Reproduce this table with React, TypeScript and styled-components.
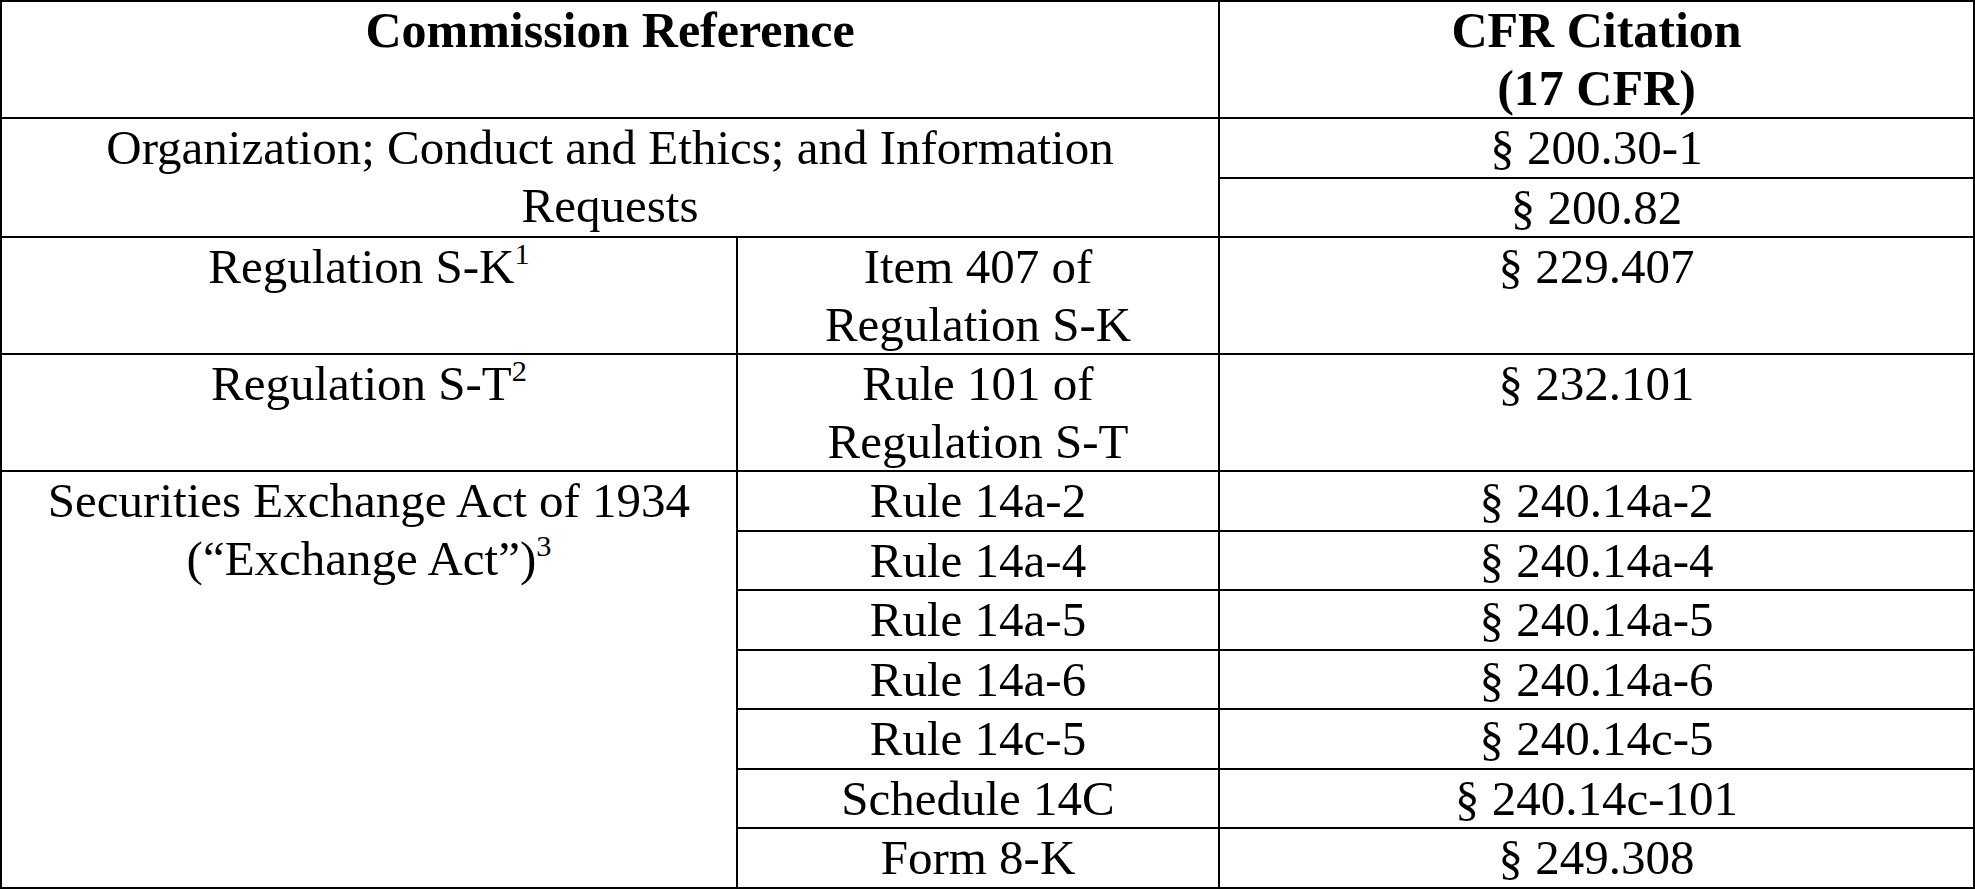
import styled, { createGlobalStyle } from "styled-components";

const GlobalStyle = createGlobalStyle`
  html, body {
    margin: 0;
    padding: 0;
    background: #ffffff;
  }
  body {
    font-family: "Liberation Serif", "Times New Roman", serif;
    color: #000000;
  }
`;

const Table = styled.table`
  width: 1975px;
  table-layout: fixed;
  border-collapse: collapse;
  border: 2px solid #000;
  font-family: "Liberation Serif", "Times New Roman", serif;
  font-size: 49px;
  line-height: 57.5px;
  color: #000;
`;

const HeadCell = styled.th`
  border: 2px solid #000;
  padding: 0 8px;
  font-size: 50px;
  font-weight: 700;
  text-align: center;
  vertical-align: top;
`;

const Cell = styled.td`
  border: 2px solid #000;
  padding: 0 8px;
  font-weight: 400;
  text-align: center;
  vertical-align: top;
`;

const Sup = styled.sup`
  font-size: 0.62em;
  line-height: 0;
  vertical-align: 0.62em;
  color: #000;
`;

type RuleRow = { rule: string; cite: string };

const exchangeRules: RuleRow[] = [
  { rule: "Rule 14a-2", cite: "§ 240.14a-2" },
  { rule: "Rule 14a-4", cite: "§ 240.14a-4" },
  { rule: "Rule 14a-5", cite: "§ 240.14a-5" },
  { rule: "Rule 14a-6", cite: "§ 240.14a-6" },
  { rule: "Rule 14c-5", cite: "§ 240.14c-5" },
  { rule: "Schedule 14C", cite: "§ 240.14c-101" },
  { rule: "Form 8-K", cite: "§ 249.308" },
];

export default function App() {
  const [first, ...rest] = exchangeRules;
  return (
    <>
      <GlobalStyle />
      <Table>
        <colgroup>
          <col style={{ width: 736 }} />
          <col style={{ width: 482 }} />
          <col />
        </colgroup>
        <thead>
          <tr>
            <HeadCell colSpan={2}>Commission Reference</HeadCell>
            <HeadCell>
              CFR Citation
              <br />
              (17 CFR)
            </HeadCell>
          </tr>
        </thead>
        <tbody>
          <tr>
            <Cell colSpan={2} rowSpan={2}>
              Organization; Conduct and Ethics; and Information
              <br />
              Requests
            </Cell>
            <Cell>§ 200.30-1</Cell>
          </tr>
          <tr>
            <Cell>§ 200.82</Cell>
          </tr>
          <tr>
            <Cell>
              Regulation S-K<Sup>1</Sup>
            </Cell>
            <Cell>
              Item 407 of
              <br />
              Regulation S-K
            </Cell>
            <Cell>§ 229.407</Cell>
          </tr>
          <tr>
            <Cell>
              Regulation S-T<Sup>2</Sup>
            </Cell>
            <Cell>
              Rule 101 of
              <br />
              Regulation S-T
            </Cell>
            <Cell>§ 232.101</Cell>
          </tr>
          <tr>
            <Cell rowSpan={exchangeRules.length}>
              Securities Exchange Act of 1934
              <br />
              (“Exchange Act”)<Sup>3</Sup>
            </Cell>
            <Cell>{first.rule}</Cell>
            <Cell>{first.cite}</Cell>
          </tr>
          {rest.map((r) => (
            <tr key={r.rule}>
              <Cell>{r.rule}</Cell>
              <Cell>{r.cite}</Cell>
            </tr>
          ))}
        </tbody>
      </Table>
    </>
  );
}
